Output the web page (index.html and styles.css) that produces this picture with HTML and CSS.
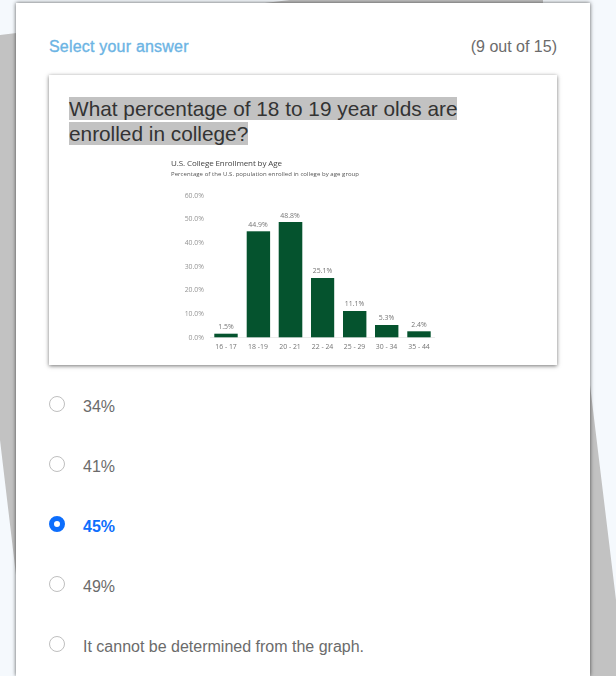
FILE: index.html
```html
<!DOCTYPE html>
<html lang="en">
<head>
<meta charset="utf-8">
<title>Select your answer</title>
<link rel="stylesheet" href="styles.css">
</head>
<body>
<svg class="backdrop" width="616" height="676" viewBox="0 0 616 676" aria-hidden="true">
  <path d="M0 35 L290 0 L543 0 L543 12 L590 12 L590 385 L616 600 L616 676 L16 676 L16 575 L0 440 Z"/>
</svg>
<main class="card">
  <header class="head">
    <h1 class="title">Select your answer</h1>
    <span class="count">(9 out of 15)</span>
  </header>
  <section class="question">
    <p class="prompt"><span class="mark">What percentage of 18 to 19 year olds are enrolled in college?</span></p>
    <svg class="chart" width="508" height="220" viewBox="49 145 508 220" role="img" aria-label="U.S. College Enrollment by Age">
      <text class="c-title" x="171" y="166" textLength="111">U.S. College Enrollment by Age</text>
      <text class="c-sub" x="171" y="176" textLength="188">Percentage of the U.S. population enrolled in college by age group</text>
      <g class="c-y">
        <text x="204" y="197.5">60.0%</text>
        <text x="204" y="221">50.0%</text>
        <text x="204" y="244.5">40.0%</text>
        <text x="204" y="268.5">30.0%</text>
        <text x="204" y="291.5">20.0%</text>
        <text x="204" y="315.5">10.0%</text>
        <text x="204" y="339.5">0.0%</text>
      </g>
      <line class="c-axis" x1="210" y1="337.5" x2="435" y2="337.5"/>
      <g class="c-bars">
        <rect x="214.3" y="333.7" width="23.4" height="3.6"/>
        <rect x="246.7" y="231.3" width="23.4" height="106"/>
        <rect x="278.7" y="222" width="23.6" height="115.3"/>
        <rect x="311" y="278" width="23.2" height="59.3"/>
        <rect x="343" y="311" width="23.4" height="26.3"/>
        <rect x="375" y="325" width="23.4" height="12.3"/>
        <rect x="407.3" y="331.3" width="23.4" height="6"/>
      </g>
      <g class="c-val">
        <text x="226" y="328.5">1.5%</text>
        <text x="258" y="226.5">44.9%</text>
        <text x="290" y="217.5">48.8%</text>
        <text x="322.5" y="272.5">25.1%</text>
        <text x="354.5" y="306">11.1%</text>
        <text x="386.5" y="319.5">5.3%</text>
        <text x="419" y="326.5">2.4%</text>
      </g>
      <g class="c-cat">
        <text x="226" y="349">16 - 17</text>
        <text x="258" y="349">18 -19</text>
        <text x="290" y="349">20 - 21</text>
        <text x="322.5" y="349">22 - 24</text>
        <text x="354.5" y="349">25 - 29</text>
        <text x="386.5" y="349">30 - 34</text>
        <text x="419" y="349">35 - 44</text>
      </g>
    </svg>
  </section>
  <form class="options">
    <label class="option"><input class="radio" type="radio" name="a"><span>34%</span></label>
    <label class="option"><input class="radio" type="radio" name="a"><span>41%</span></label>
    <label class="option option-on"><input class="radio" type="radio" name="a" checked><span>45%</span></label>
    <label class="option"><input class="radio" type="radio" name="a"><span>49%</span></label>
    <label class="option"><input class="radio" type="radio" name="a"><span>It cannot be determined from the graph.</span></label>
  </form>
</main>
</body>
</html>
```

FILE: styles.css
```css
* { box-sizing: border-box; }

html, body {
  margin: 0;
  height: 676px;
  overflow: hidden;
}

body {
  position: relative;
  background: #f5f9fd;
  font-family: "Liberation Sans", Arial, sans-serif;
  color: #666;
}

.backdrop {
  position: absolute;
  left: 0;
  top: 0;
}

.backdrop path { fill: #c2c2c2; }

.card {
  position: relative;
  width: 574px;
  height: 673px;
  margin: 3px 0 0 16px;
  padding: 0 33px;
  background: #fff;
  box-shadow: 0 0 4px rgba(0, 0, 0, 0.65);
}

.head {
  display: flex;
  justify-content: space-between;
  align-items: center;
  height: 72px;
  padding-top: 16px;
}

.title {
  margin: 0;
  font-size: 16px;
  font-weight: 400;
  letter-spacing: 0.2px;
  -webkit-text-stroke: 0.35px #6cb4e4;
  color: #6cb4e4;
}

.count {
  font-size: 16px;
  color: #6b6b6b;
}

.question {
  height: 290px;
  padding: 21px 20px 0;
  background: #fff;
  box-shadow: 0 1px 4px rgba(0, 0, 0, 0.55);
  position: relative;
}

.prompt {
  margin: 0;
  width: 400px;
  font-size: 20.8px;
  line-height: 25px;
  color: #333;
}

.mark { background: #c2c2c2; }

.chart {
  position: absolute;
  left: 0;
  top: 70px;
  filter: blur(0.3px);
}

.chart text { font-family: "Open Sans", sans-serif; fill: #747474; }
.chart .c-title { font-size: 8px; fill: #444; }
.chart .c-sub { font-size: 6px; fill: #555; }
.chart .c-y text { font-size: 6.9px; text-anchor: end; fill: #949494; }
.c-val text, .c-cat text { font-size: 6.9px; text-anchor: middle; }
.c-axis { stroke: #e6e6e6; stroke-width: 0.8; }
.c-bars rect { fill: #05532e; }

.options {
  display: flex;
  flex-direction: column;
  padding-top: 9px;
}

.option {
  display: flex;
  align-items: center;
  gap: 18px;
  height: 60px;
  font-size: 16px;
  color: #6b6b6b;
}

.option span { position: relative; top: 3px; }

.radio {
  appearance: none;
  width: 16px;
  height: 16px;
  margin: 0;
  border: 1px solid #bfbfbf;
  border-radius: 50%;
  background: #fff;
}

.radio:checked {
  border: 5px solid #0d6efd;
}

.option-on {
  color: #0d6efd;
  font-weight: 700;
}
```
